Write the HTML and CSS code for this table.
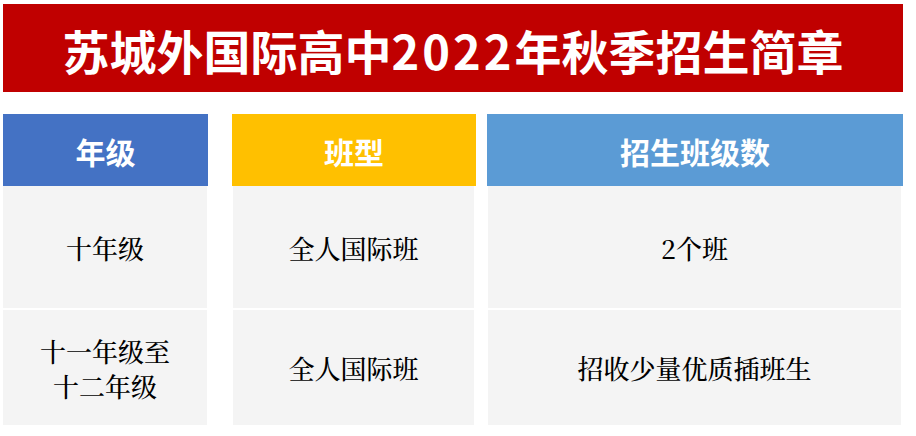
FILE: index.html
```html
<!DOCTYPE html>
<html lang="zh-CN">
<head>
<meta charset="utf-8">
<title>苏城外国际高中2022年秋季招生简章</title>
<link rel="stylesheet" href="styles.css">
</head>
<body>
<div class="page">
  <div class="banner"><h1 class="title">苏城外国际高中<span class="digits">2022</span>年秋季招生简章</h1></div>
  <div class="table">
    <div class="head col1 head-grade">年级</div>
    <div class="head col2 head-type">班型</div>
    <div class="head col3 head-count">招生班级数</div>

    <div class="cell col1">十年级</div>
    <div class="cell col2">全人国际班</div>
    <div class="cell col3">2个班</div>

    <div class="cell col1 last">十一年级至<br>十二年级</div>
    <div class="cell col2 last">全人国际班</div>
    <div class="cell col3 last">招收少量优质插班生</div>
  </div>
</div>
</body>
</html>
```

FILE: styles.css
```css
html, body {
  margin: 0;
  padding: 0;
  background: #ffffff;
}

.page {
  width: 916px;
  height: 436px;
  padding: 4px 13px 0 3px;
  box-sizing: border-box;
  font-family: "Noto Sans CJK SC", "Noto Sans", sans-serif;
}

.banner {
  height: 88px;
  background: #c00000;
  display: flex;
  align-items: center;
  justify-content: center;
}

.title {
  margin: 0;
  padding-top: 2px;
  color: #ffffff;
  font-size: 47px;
  font-weight: 700;
  line-height: 1;
  letter-spacing: 0;
}

.title .digits {
  letter-spacing: 3px;
}

.table {
  margin-top: 22px;
  display: grid;
  grid-template-columns: 205px 24px 244px 11px 416px;
  grid-template-rows: 72px 122px 117px;
}

.col1 { grid-column: 1; }
.col2 { grid-column: 3; }
.col3 { grid-column: 5; }

.head {
  display: flex;
  align-items: center;
  justify-content: center;
  color: #ffffff;
  font-size: 30px;
  font-weight: 700;
  padding-top: 2px;
}

.head-grade { background: #4472c4; }
.head-type { background: #ffc000; }
.head-count { background: #5b9bd5; }

.cell {
  background: #f4f4f4;
  display: flex;
  align-items: center;
  justify-content: center;
  text-align: center;
  font-family: "Noto Serif CJK SC", "Noto Sans CJK SC", serif;
  font-size: 26px;
  font-weight: 500;
  line-height: 35px;
  color: #000000;
}

.cell.col1 { margin-right: 1px; }
.cell.col2 { margin-left: 1px; margin-right: 2px; }
.cell.col3 { margin-left: 1px; margin-right: 2px; }

.last { margin-top: 2px; }
```
